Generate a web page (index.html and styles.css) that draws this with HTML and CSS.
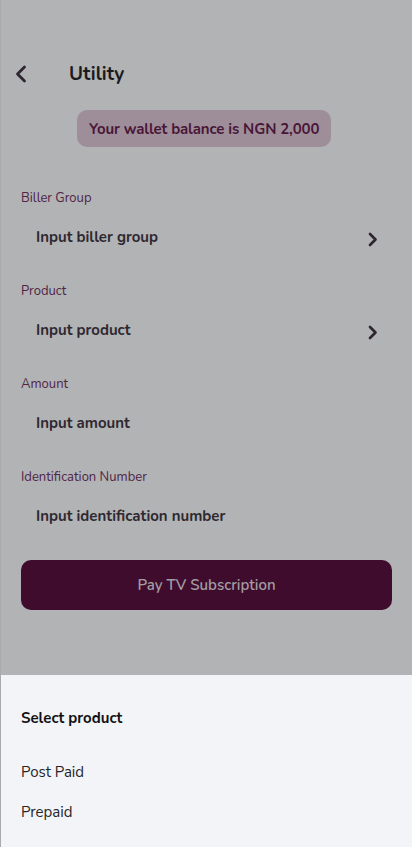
FILE: index.html
```html
<!DOCTYPE html>
<html>
<head>
<meta charset="utf-8">
<link rel="stylesheet" href="styles.css">
</head>
<body>
<div class="screen">
  <div class="main">
    <div class="header">
      <span class="back">
        <svg width="14" height="18" viewBox="0 0 14 18"><path d="M10.5 2 L3.5 9 L10.5 16" fill="none" stroke="#2f2530" stroke-width="2.8" stroke-linecap="round" stroke-linejoin="round"/></svg>
      </span>
      <h1 class="title">Utility</h1>
    </div>
    <div class="pill">Your wallet balance is NGN 2,000</div>
    <div class="fields">
      <div class="field">
        <div class="label">Biller Group</div>
        <div class="input"><span>Input biller group</span>
          <svg class="chev" width="12" height="15" viewBox="0 0 12 15"><path d="M3 2 L8.5 7.5 L3 13" fill="none" stroke="#2f2530" stroke-width="2.7" stroke-linecap="round" stroke-linejoin="round"/></svg>
        </div>
      </div>
      <div class="field">
        <div class="label">Product</div>
        <div class="input"><span>Input product</span>
          <svg class="chev" width="12" height="15" viewBox="0 0 12 15"><path d="M3 2 L8.5 7.5 L3 13" fill="none" stroke="#2f2530" stroke-width="2.7" stroke-linecap="round" stroke-linejoin="round"/></svg>
        </div>
      </div>
      <div class="field">
        <div class="label">Amount</div>
        <div class="input"><span>Input amount</span></div>
      </div>
      <div class="field">
        <div class="label">Identification Number</div>
        <div class="input"><span>Input identification number</span></div>
      </div>
    </div>
    <button class="pay">Pay TV Subscription</button>
  </div>
  <div class="sheet">
    <div class="sheet-title">Select product</div>
    <div class="option">Post Paid</div>
    <div class="option">Prepaid</div>
  </div>
</div>
</body>
</html>
```
FILE: styles.css
```css
* { box-sizing: border-box; }
html, body { margin: 0; padding: 0; }
body {
  font-family: "Nunito", "Lato", "Noto Sans", sans-serif;
  width: 412px;
  height: 847px;
  overflow: hidden;
}
.screen {
  width: 412px;
  height: 847px;
  display: flex;
  flex-direction: column;
  border-left: 1px solid #a9aaac;
}
.main {
  flex: 1;
  background: #b2b3b5;
  padding: 0 20px 0 20px;
  display: flex;
  flex-direction: column;
}
.header {
  margin-top: 56px;
  height: 36px;
  display: flex;
  align-items: center;
}
.back {
  display: flex;
  margin-left: -7px;
  width: 55px;
}
.title {
  margin: 0;
  font-size: 19px;
  font-weight: 700;
  color: #1a1a20;
  letter-spacing: 0.1px;
}
.pill {
  margin-top: 18px;
  margin-left: 56px;
  align-self: flex-start;
  height: 37px;
  padding: 0 12px;
  display: flex;
  align-items: center;
  background: #9e8e99;
  border-radius: 10px;
  color: #4a1638;
  font-size: 15px;
  font-weight: 700;
  letter-spacing: -0.12px;
}
.fields {
  margin-top: 43px;
  display: flex;
  flex-direction: column;
  gap: 22px;
}
.field {
  display: flex;
  flex-direction: column;
}
.label {
  height: 16px;
  line-height: 16px;
  font-size: 13px;
  color: #4f2445;
}
.input {
  margin-top: 7px;
  height: 48px;
  display: flex;
  align-items: center;
  justify-content: space-between;
  padding: 0 13px 0 15px;
  font-size: 15px;
  font-weight: 700;
  color: #2e2830;
}
.chev { margin-top: 4px; }
.pay {
  margin-top: 20px;
  height: 50px;
  width: 100%;
  border: none;
  border-radius: 10px;
  background: #3f0c2e;
  color: #a39ca3;
  font-family: inherit;
  font-size: 15px;
  font-weight: 600;
}
.sheet {
  height: 172px;
  background: #f3f4f8;
  padding: 32px 20px 0 20px;
  font-family: "Nunito Sans", "Lato", "Noto Sans", sans-serif;
}
.sheet-title {
  height: 22px;
  line-height: 22px;
  font-size: 15px;
  font-weight: 700;
  color: #111114;
  margin-bottom: 32px;
}
.option {
  height: 22px;
  line-height: 22px;
  font-size: 15px;
  color: #262629;
  margin-bottom: 18px;
}
```
